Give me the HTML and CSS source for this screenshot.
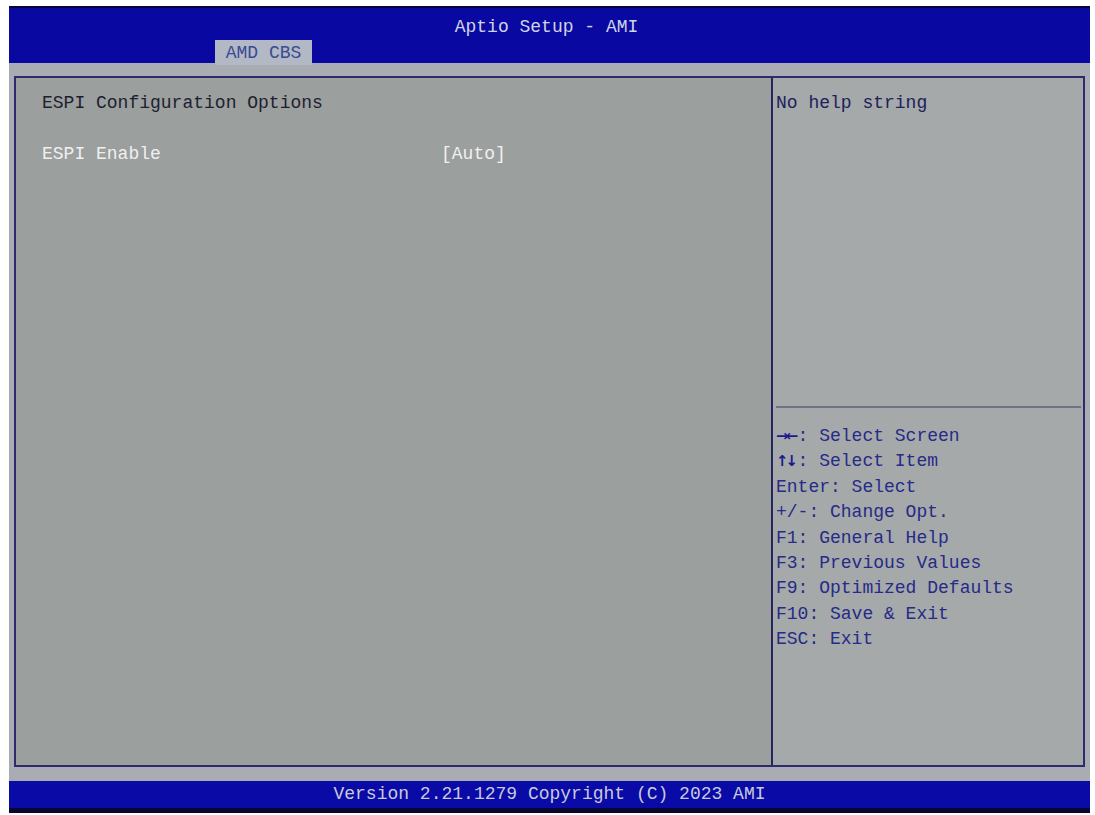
FILE: index.html
```html
<!DOCTYPE html>
<html>
<head>
<meta charset="utf-8">
<title>Aptio Setup - AMI</title>
<link rel="stylesheet" href="styles.css">
</head>
<body>
<div class="screen">
  <header class="topbar">
    <div class="title">Aptio Setup - AMI</div>
    <div class="tabs"><div class="tab">AMD CBS</div></div>
  </header>
  <main class="frame">
    <div class="panel">
      <section class="settings">
        <div class="row heading">ESPI Configuration Options</div>
        <div class="row blank">&nbsp;</div>
        <div class="row item"><span class="label">ESPI Enable</span><span class="value">[Auto]</span></div>
      </section>
      <aside class="side">
        <div class="help">No help string</div>
        <div class="sep"></div>
        <ul class="keys">
          <li><span class="arr">→←</span>: Select Screen</li>
          <li><span class="arr">↑↓</span>: Select Item</li>
          <li>Enter: Select</li>
          <li>+/-: Change Opt.</li>
          <li>F1: General Help</li>
          <li>F3: Previous Values</li>
          <li>F9: Optimized Defaults</li>
          <li>F10: Save &amp; Exit</li>
          <li>ESC: Exit</li>
        </ul>
      </aside>
    </div>
  </main>
  <footer class="bottombar">Version 2.21.1279 Copyright (C) 2023 AMI</footer>
</div>
</body>
</html>
```
FILE: styles.css
```css
html, body {
  margin: 0;
  padding: 0;
  background: #ffffff;
}
body {
  padding: 6px 5px 0 9px;
  font-family: "Liberation Mono", "DejaVu Sans Mono", monospace;
  font-size: 18px;
}
.screen {
  width: 1081px;
  background: #a9adb3;
  display: flex;
  flex-direction: column;
}
.topbar {
  height: 55px;
  background: #0909a2;
  border-top: 2px solid #06063a;
  display: flex;
  flex-direction: column;
}
.title {
  margin-top: 8px;
  height: 22px;
  line-height: 22px;
  text-align: center;
  color: #d0d4e6;
  padding-right: 6px;
}
.tabs {
  margin-top: 2px;
  padding-left: 206px;
  display: flex;
}
.tab {
  width: 97px;
  height: 25px;
  line-height: 26px;
  text-align: center;
  background: #b3b9c4;
  color: #3a4a94;
}
.frame {
  padding: 13px 5px 14px 5px;
}
.panel {
  height: 687px;
  border: 2px solid #2c2c6c;
  display: grid;
  grid-template-columns: 755px 1fr;
  background: #9b9f9d;
}
.settings {
  padding: 13px 0 0 26px;
  line-height: 25.5px;
}
.heading {
  color: #1e1e30;
}
.item {
  display: flex;
  color: #f0f0f2;
}
.label {
  width: 399px;
}
.side {
  border-left: 2px solid #26265e;
  background: #a5a9aa;
  display: flex;
  flex-direction: column;
}
.help {
  height: 328px;
  padding: 13px 0 0 3px;
  box-sizing: border-box;
  line-height: 25.5px;
  color: #20205a;
}
.sep {
  height: 2px;
  margin: 0 2px 0 3px;
  background: #6e7284;
}
.keys {
  list-style: none;
  margin: 0;
  padding: 16px 0 0 3px;
  line-height: 25.4px;
  color: #262a88;
}
.arr {
  display: inline-block;
  width: 21.6px;
  font-family: "DejaVu Sans", sans-serif;
  font-weight: bold;
  font-size: 15px;
  letter-spacing: -3px;
  color: #1a1a90;
}
.bottombar {
  height: 27px;
  line-height: 27px;
  background: #0a0aa6;
  border-bottom: 5px solid #08082e;
  text-align: center;
  color: #c8cadc;
}
```
